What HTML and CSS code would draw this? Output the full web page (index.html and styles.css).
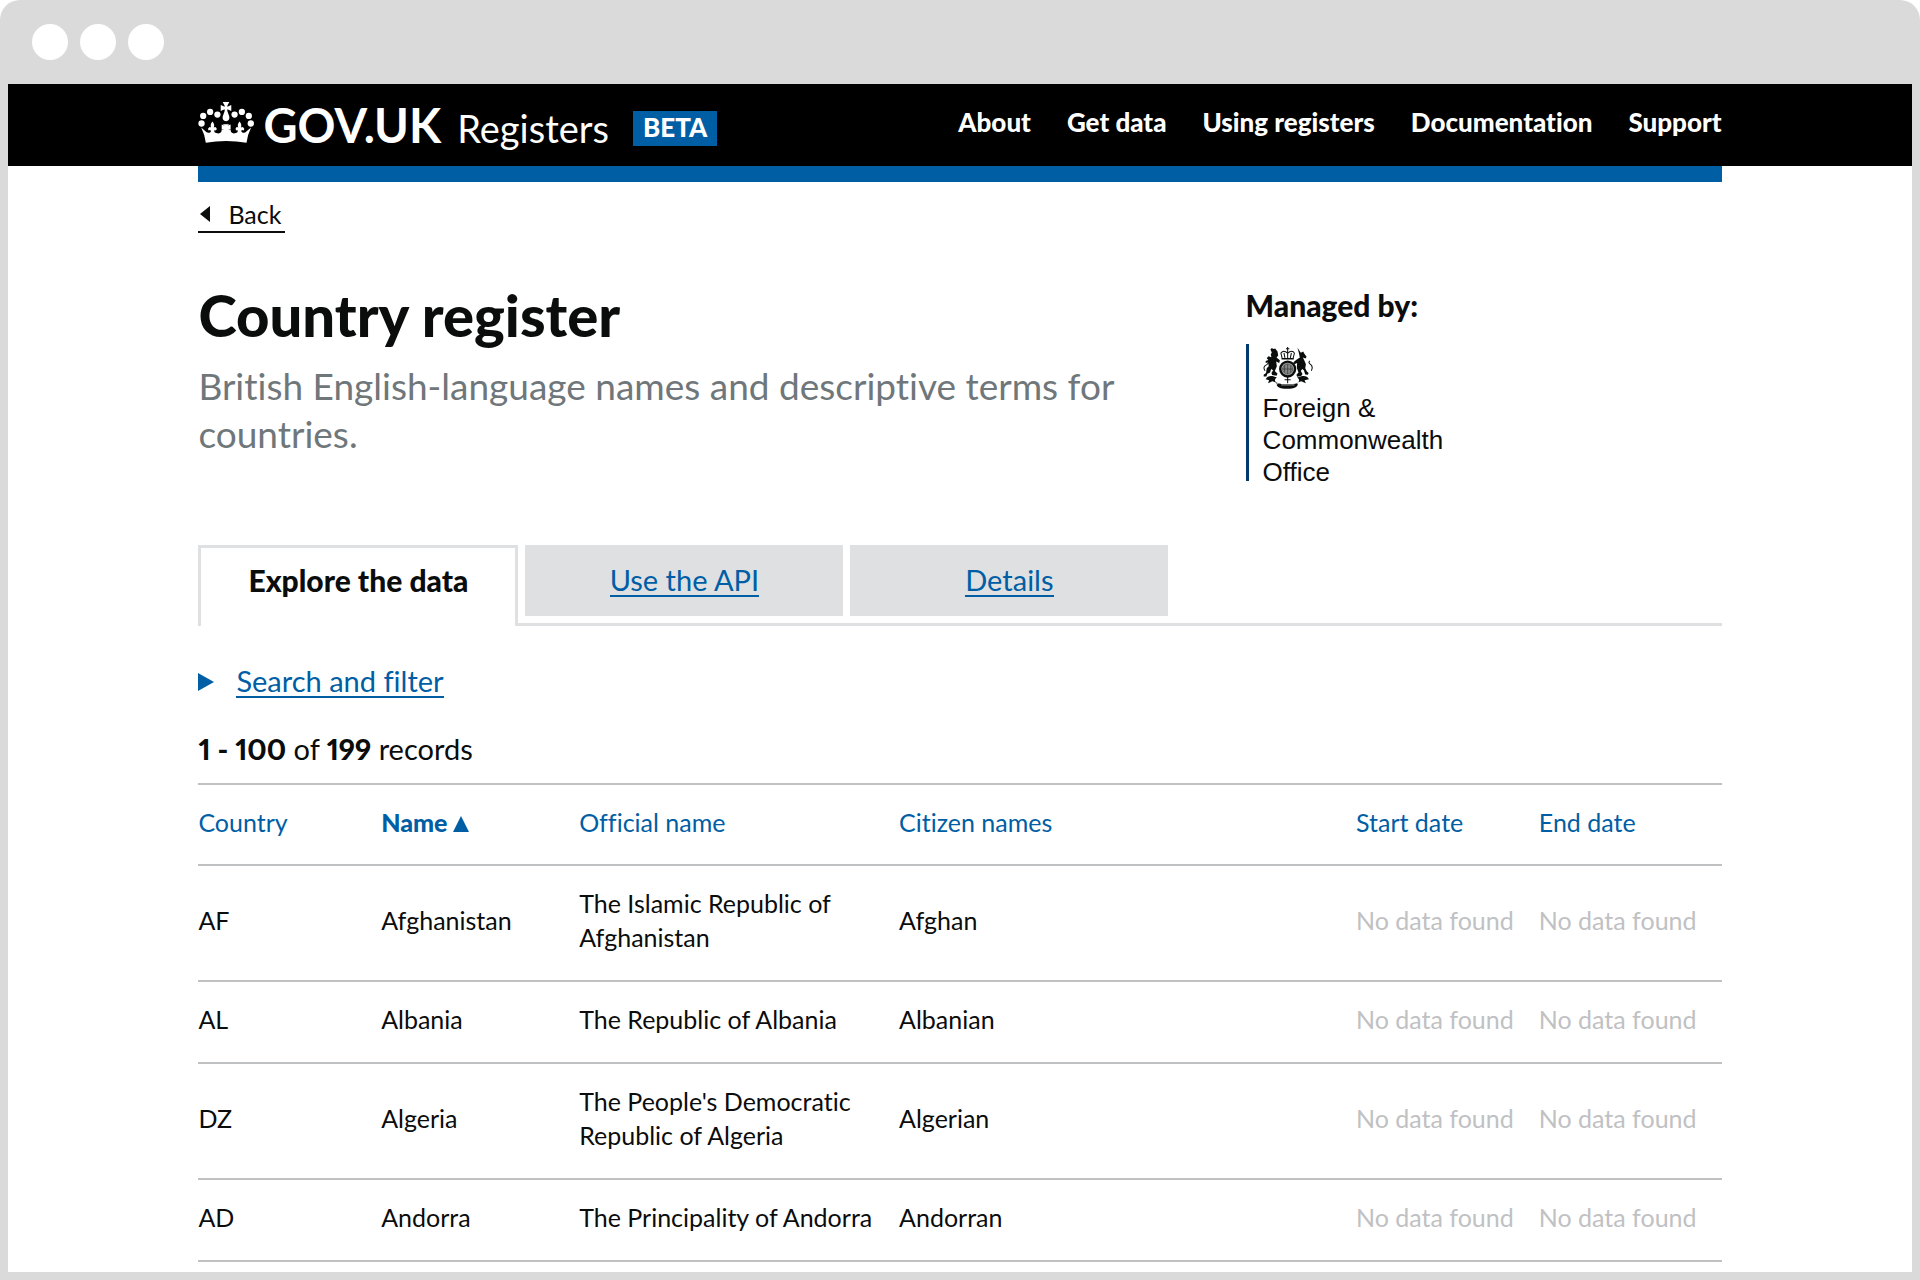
FILE: index.html
```html
<!DOCTYPE html>
<html lang="en">
<head>
<meta charset="utf-8">
<title>Country register - GOV.UK Registers</title>
<link rel="stylesheet" href="styles.css">
</head>
<body>
<div class="window">
  <div class="titlebar"><span class="dot"></span><span class="dot"></span><span class="dot"></span></div>
  <div class="page">
    <header class="header">
      <div class="brand">
        <a class="logo" href="#">
          <svg class="crown" viewBox="27 36 168 124" fill="#fff" aria-hidden="true">
            <circle cx="37" cy="101" r="9.5"/><circle cx="42" cy="78" r="9.5"/><circle cx="63" cy="66" r="9.5"/><circle cx="85" cy="74" r="9.5"/>
            <circle cx="137" cy="74" r="9.5"/><circle cx="159" cy="66" r="9.5"/><circle cx="180" cy="78" r="9.5"/><circle cx="186" cy="101" r="9.5"/>
            <path d="M101 36h20l-6 11v3l12-5v18l-12-5v5l6 17q2 13-10 14q-12-1-10-14l6-17v-5l-12 5V45l12 5v-3z"/>
            <path d="M36 113L48 124Q54 132 63 128Q69 123 62 121Q56 124 57 116Q63 109 66 114Q62 103 70 95Q78 103 74 114Q78 109 83 116Q83 124 76 121Q73 131 88 131Q99 128 97 122L106 117L98 120V104L107 108L101 103H121L115 108L125 104V120L116 117L126 122Q124 128 135 131Q149 131 146 121Q140 124 140 116Q144 109 148 114Q144 103 152 95Q160 103 156 114Q160 109 166 116Q167 124 160 121Q154 123 160 128Q169 132 174 124L187 113Q176 135 173 159Q111 149 50 159Q47 135 36 113Z"/>
          </svg>
          <span class="logo-text">GOV.UK</span>
        </a>
        <a class="product" href="#">Registers</a>
        <strong class="phase">BETA</strong>
      </div>
      <nav class="nav">
        <a href="#">About</a><a href="#">Get data</a><a href="#">Using registers</a><a href="#">Documentation</a><a href="#">Support</a>
      </nav>
    </header>
    <main class="main">
      <div class="bar"></div>
      <a class="back" href="#"><svg class="back-arrow" viewBox="0 0 10 16" aria-hidden="true"><path d="M10 0v16L0 8z" fill="#0b0c0c"/></svg>Back</a>
      <div class="intro">
        <div class="summary">
          <h1 class="title">Country register</h1>
          <p class="lead">British English-language names and descriptive terms for countries.</p>
        </div>
        <aside class="managed">
          <h2 class="managed-title">Managed by:</h2>
          <div class="org">
            <svg class="crest" viewBox="98 233 148 124" aria-hidden="true">
              <g fill="#0b0c0c">
                <path d="M120 240l4-4 5 3 5-2 7 9 2 12-5 6 10 8-2 8-9-4 2 14-6 14 8 8-3 6-13-2-2-6 5-8-6-4-3 10-8 4-3 8-8 0 0-5 7-5 2-14 6-6-2-12-7 2 0-6 8-3-5-5 5-6 9 3-2-8 3-6z"/>
                <path d="M200 235l10 15 7-4 3 6 7 10-3 5-8-3 4 8 5 12-2 12 5 9 5 5-2 5-8-1-4-12-5-4-4 6 5 9-4 6-12 2-2-6 6-7-5-14 1-14-8 4-3-6 10-8 9-6-3-14z"/>
                <path d="M106 328q6-11 20-9l13 4q-9 5-4 13 6 6 18 6h34q14 0 17-7 3-8-5-12l15-4q14-2 20 9l-13 3 4 9-14-6-10 4q2 13-14 17-18 3-36 0-14-4-13-16l-12-5-13 6 3-9z"/>
              </g>
              <path d="M104 303q-8-12 5-18 8-5 2-10M241 303q7-13-4-20-6-5 0-9" fill="none" stroke="#0b0c0c" stroke-width="3"/>
              <circle cx="171" cy="298" r="22" fill="#aaa" stroke="#0b0c0c" stroke-width="7"/>
              <circle cx="171" cy="298" r="15" fill="#888" stroke="#444" stroke-width="2"/>
              <path d="M171 283v30M156 298h30M162 286v22M180 288v20" stroke="#333" stroke-width="2" fill="none"/>
              <path d="M155 267l-4-16q6-8 14-4l6 4 6-4q10-4 14 4l-4 16z" fill="#fff" stroke="#0b0c0c" stroke-width="3"/>
              <path d="M171 233v34M166 238h10M160 250l3 15M182 250l-3 15M153 268h36M171 322v18M162 330h18" stroke="#0b0c0c" stroke-width="3" fill="none"/>
              <path d="M144 340q-6 1-7 6M198 340q8 1 8 6M152 345h39" fill="none" stroke="#fff" stroke-width="2"/>
            </svg>
            <span class="org-name">Foreign &amp;<br>Commonwealth<br>Office</span>
          </div>
        </aside>
      </div>
      <div class="tabs">
        <span class="tab tab-active">Explore the data</span>
        <a class="tab" href="#"><span class="tab-label">Use the API</span></a>
        <a class="tab" href="#"><span class="tab-label">Details</span></a>
      </div>
      <a class="filter" href="#"><svg class="filter-arrow" viewBox="0 0 16 18" aria-hidden="true"><path d="M0 0l16 9L0 18z" fill="#005ea5"/></svg><span class="filter-label">Search and filter</span></a>
      <p class="count"><b>1 - 100</b> of <b>199</b> records</p>
      <table class="records">
        <colgroup><col class="c-code"><col class="c-name"><col class="c-official"><col class="c-citizen"><col class="c-date"><col class="c-date"></colgroup>
        <thead>
          <tr><th><a href="#">Country</a></th><th><a class="sorted" href="#">Name <svg class="sort" viewBox="0 0 16 16" aria-hidden="true"><path d="M8 0l8 16H0z" fill="#005ea5"/></svg></a></th><th><a href="#">Official name</a></th><th><a href="#">Citizen names</a></th><th><a href="#">Start date</a></th><th><a href="#">End date</a></th></tr>
        </thead>
        <tbody>
          <tr><td>AF</td><td>Afghanistan</td><td>The Islamic Republic of Afghanistan</td><td>Afghan</td><td class="empty">No data found</td><td class="empty">No data found</td></tr>
          <tr><td>AL</td><td>Albania</td><td>The Republic of Albania</td><td>Albanian</td><td class="empty">No data found</td><td class="empty">No data found</td></tr>
          <tr><td>DZ</td><td>Algeria</td><td>The People's Democratic Republic of Algeria</td><td>Algerian</td><td class="empty">No data found</td><td class="empty">No data found</td></tr>
          <tr><td>AD</td><td>Andorra</td><td>The Principality of Andorra</td><td>Andorran</td><td class="empty">No data found</td><td class="empty">No data found</td></tr>
        </tbody>
      </table>
    </main>
  </div>
</div>
</body>
</html>
```
FILE: styles.css
```css
* { box-sizing: border-box; }
body { margin: 0; background: #fff; color: #0b0c0c; font: 25px/34px Lato, "Open Sans", sans-serif; font-variant-ligatures: none; font-variant-numeric: lining-nums proportional-nums; }
h1, h2, p { margin: 0; }
h1, h2, b, strong { font-weight: 900; }
a { color: #005ea5; text-decoration: none; }
svg { display: block; flex: none; }

.window { min-height: 100vh; display: flex; flex-direction: column; padding: 0 8px 8px; background: #dadada; border-radius: 20px 20px 0 0; }
.titlebar { height: 84px; display: flex; align-items: center; gap: 12px; padding: 0 24px; }
.dot { width: 36px; height: 36px; border-radius: 50%; background: #fff; }
.page { flex: 1; background: #fff; }

.header { min-height: 82px; padding: 0 10%; display: flex; justify-content: space-between; align-items: center; background: #000; }
.header a { color: #fff; }
.brand { display: flex; align-items: baseline; }
.logo { display: flex; align-items: baseline; gap: 9px; }
.crown { width: 56px; height: 41px; }
.logo-text { font-size: 47px; line-height: 56px; font-weight: 700; }
.product { margin-left: 16px; font-size: 38px; }
.phase { align-self: center; margin: 6px 0 0 24px; padding: 0 10px 2px; font-size: 26px; line-height: 33px; background: #005ea5; color: #fff; }
.nav { display: flex; gap: 36px; padding-bottom: 6px; font-size: 26px; font-weight: 900; }

.main { padding: 0 10% 8px; }
.bar { height: 16px; background: #005ea5; }
.back { display: inline-flex; align-items: center; margin-top: 15px; padding: 0 4px 0 2px; border-bottom: 2px solid #0b0c0c; color: #0b0c0c; }
.back-arrow { width: 10px; height: 16px; margin-right: 18px; }

.intro { display: flex; justify-content: space-between; margin-top: 50px; }
.summary { width: 62%; }
.title { font-size: 58px; line-height: 64px; }
.lead { margin-top: 15px; font-size: 37px; line-height: 48px; color: #6f777b; }
.managed { width: 476px; padding-top: 4px; }
.managed-title { font-size: 30px; line-height: 36px; }
.org { display: flow-root; margin-top: 21px; padding: 3px 0 0 14px; border-left: 3px solid #003a70; }
.crest { width: 50px; height: 42px; }
.org-name { display: block; margin: 3px 0 -7px; font: 26px/32px "Liberation Sans", Arial, sans-serif; }

.tabs { display: flex; align-items: flex-start; margin-top: 64px; gap: 7px; box-shadow: inset 0 -3px #dee0e2; font-size: 29px; }
.tab { width: 318px; height: 71px; display: flex; justify-content: center; align-items: center; background: #dee0e2; }
.tab-active { width: 320px; height: 81px; padding-bottom: 14px; border: 3px solid #dee0e2; border-bottom: 0; background: #fff; font-size: 30px; font-weight: 900; }
.tab-label, .filter-label { line-height: 30px; border-bottom: 2px solid; }

.filter { display: inline-flex; align-items: center; gap: 22px; margin-top: 40px; font-size: 29px; }
.filter-arrow { width: 16px; height: 18px; }
.count { margin: 34px 0 17px; font-size: 29px; }

.records { width: 100%; table-layout: fixed; border-collapse: separate; border-spacing: 0; border-top: 2px solid #bfc1c3; text-align: left; }
.c-code, .c-date { width: 12%; }
.c-name { width: 13%; }
.c-official { width: 21%; }
.c-citizen { width: 30%; }
.records th, .records td { padding: 20px 0 26px; border-bottom: 2px solid #bfc1c3; font-weight: 400; vertical-align: middle; }
.records th { padding-bottom: 25px; }
.records td:nth-child(3) { padding-right: 16px; }
.records .sorted { font-weight: 900; }
.sort { display: inline-block; width: 16px; height: 16px; }
.records .empty { color: #bfc1c3; }
```
